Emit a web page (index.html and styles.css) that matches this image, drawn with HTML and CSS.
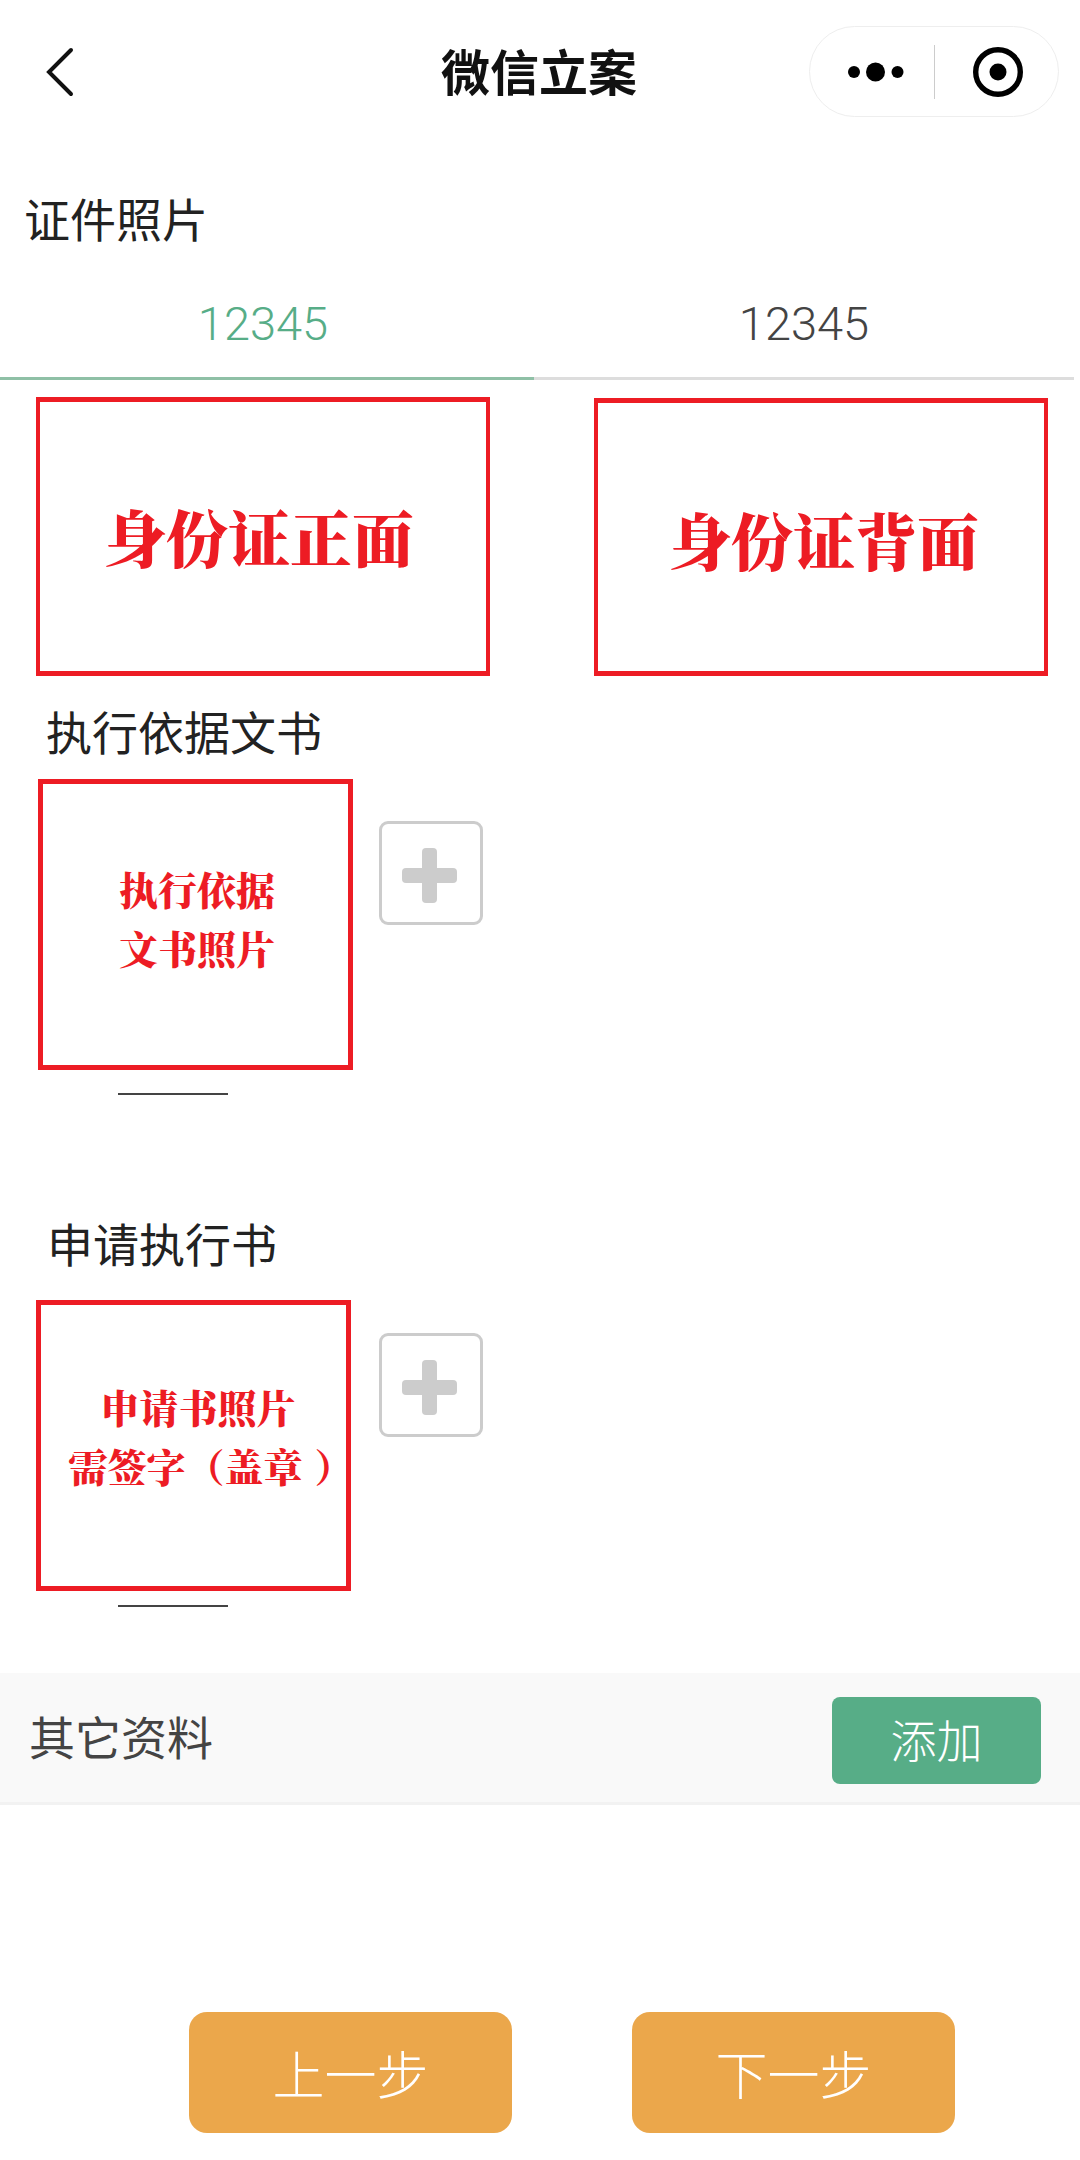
FILE: index.html
```html
<!DOCTYPE html>
<html lang="zh">
<head>
<meta charset="utf-8">
<title>微信立案</title>
<link rel="stylesheet" href="styles.css">
</head>
<body>
<div class="page">
  <header class="nav">
    <svg class="back" width="28" height="50" viewBox="0 0 28 50"><path d="M25 3 L3 25 L25 47" fill="none" stroke="#111" stroke-width="4" stroke-linecap="round" stroke-linejoin="miter"/></svg>
    <h1 class="nav-title">微信立案</h1>
    <div class="capsule">
      <svg class="dots" width="56" height="20" viewBox="0 0 56 20"><circle cx="6" cy="10" r="6" fill="#000"/><circle cx="27.5" cy="10" r="9.5" fill="#000"/><circle cx="49.5" cy="10" r="6" fill="#000"/></svg>
      <span class="capsule-line"></span>
      <svg class="target" width="50" height="50" viewBox="0 0 50 50"><circle cx="25" cy="25" r="22.3" fill="none" stroke="#000" stroke-width="5.4"/><circle cx="25" cy="25" r="8.5" fill="#000"/></svg>
    </div>
  </header>

  <h2 class="heading heading-cert">证件照片</h2>

  <div class="tabs">
    <div class="tab tab-active">12345</div>
    <div class="tab tab-idle">12345</div>
  </div>

  <div class="id-row">
    <div class="sample sample-front">身份证正面</div>
    <div class="sample sample-back">身份证背面</div>
  </div>

  <h2 class="heading heading-basis">执行依据文书</h2>
  <div class="upload upload-basis">
    <div class="upload-item">
      <div class="sample sample-doc">执行依据<br>文书照片</div>
      <span class="dash"></span>
    </div>
    <div class="add-box"><span class="plus"></span></div>
  </div>

  <h2 class="heading heading-apply">申请执行书</h2>
  <div class="upload upload-apply">
    <div class="upload-item">
      <div class="sample sample-apply"><div><span class="apply-first">申请书照片</span><br>需签字（盖章<span class="paren-close">）</span></div></div>
      <span class="dash"></span>
    </div>
    <div class="add-box"><span class="plus"></span></div>
  </div>

  <div class="other">
    <span class="other-label">其它资料</span>
    <button class="add-btn">添加</button>
  </div>

  <footer class="footer">
    <button class="step-btn">上一步</button>
    <button class="step-btn">下一步</button>
  </footer>
</div>
</body>
</html>
```
FILE: styles.css
```css
* { box-sizing: border-box; }
html, body { margin: 0; padding: 0; background: #fff; }
body { font-family: "Noto Sans CJK SC", "Liberation Sans", sans-serif; color: #222; }
.page { width: 1080px; height: 2160px; overflow: hidden; }
.nav { height: 117px; padding-top: 26px; display: grid; grid-template-columns: 1fr auto 1fr; align-items: center; }
.back { margin-left: 46px; margin-top: 1px; justify-self: start; }
.nav-title { margin: -3px 0 0 -2px; font-size: 49px; line-height: 60px; font-weight: 700; color: #111; }
.capsule { justify-self: end; margin-right: 21px; width: 250px; height: 91px; border: 1px solid #eee; border-radius: 46px; display: flex; align-items: center; background: #fff; }
.dots { margin-left: 38px; }
.capsule-line { width: 1px; height: 54px; background: #ccc; margin-left: 30px; }
.target { margin-left: 38px; }
.heading { margin: 0; font-size: 46px; line-height: 60px; font-weight: 400; color: #222; }
.heading-cert { margin-top: 70px; padding-left: 24px; }
.tabs { display: flex; height: 133px; width: 1074px; }
.tab { display: flex; align-items: center; justify-content: center; padding-top: 22px; font-family: Roboto, "Liberation Sans", sans-serif; font-weight: 300; font-size: 47px; color: #444; border-bottom: 3px solid #ddd; }
.tab-active { width: 534px; color: #57ad87; border-bottom-color: #8fc0a6; padding-right: 8px; }
.tab-idle { width: 540px; }
.id-row { display: flex; align-items: flex-start; padding: 17px 32px 0 36px; justify-content: space-between; }
.sample { border: 5px solid #ed1c24; color: #ed1c24; background: #fff; font-family: "Noto Serif CJK SC", "Noto Sans CJK SC", serif; font-weight: 900; display: flex; align-items: center; justify-content: center; text-align: center; text-spacing-trim: space-all; }
.sample-front { width: 454px; height: 279px; font-size: 62px; padding-right: 8px; border-width: 5px 4px; }
.sample-back { width: 454px; height: 278px; margin-top: 1px; font-size: 62px; padding: 4px 0 0 6px; border-width: 5px 4px; }
.heading-basis { margin-top: 24px; padding-left: 46px; }
.upload { display: flex; align-items: flex-start; }
.upload-basis { margin-top: 19px; padding-left: 38px; }
.upload-item { display: flex; flex-direction: column; align-items: flex-start; }
.sample-doc { width: 315px; height: 291px; font-size: 39px; line-height: 59px; padding: 0 0 14px 3px; }
.sample-apply { width: 315px; height: 291px; font-size: 39px; line-height: 59px; padding: 0 0 19px 35px; white-space: nowrap; }
.apply-first { display: inline-block; margin-right: 26px; }
.paren-close { margin-left: 12px; }
.dash { width: 110px; height: 2px; background: #444; margin-top: 23px; }
.upload-basis .dash { margin-left: 80px; }
.upload-apply .dash { margin-left: 82px; margin-top: 14px; }
.add-box { width: 104px; height: 104px; margin-top: 42px; margin-left: 26px; border: 3px solid #ccc; border-radius: 9px; display: flex; align-items: center; justify-content: center; }
.upload-apply .add-box { margin-top: 33px; margin-left: 28px; }
.plus { position: relative; width: 55px; height: 55px; margin: 4px 3px 0 0; }
.plus::before, .plus::after { content: ""; position: absolute; background: #ccc; border-radius: 4px; }
.plus::before { left: 20px; top: 0; width: 15px; height: 55px; }
.plus::after { left: 0; top: 20px; width: 55px; height: 15px; }
.heading-apply { margin-top: 117px; padding-left: 47px; }
.upload-apply { margin-top: 28px; padding-left: 36px; }
.other { margin-top: 66px; height: 132px; background: #f9f9f9; border-bottom: 3px solid #f2f2f2; display: flex; align-items: center; justify-content: space-between; padding: 0 39px 0 29px; }
.other-label { font-size: 46px; font-weight: 400; color: #444; margin-bottom: 5px; }
.add-btn { width: 209px; height: 87px; margin-top: 5px; border: 0; border-radius: 8px; background: #57ad87; color: #fff; font: 300 46px "Noto Sans CJK SC", sans-serif; padding: 0 0 4px; }
.footer { margin-top: 207px; padding-left: 189px; display: flex; gap: 120px; }
.step-btn { width: 323px; height: 121px; border: 0; border-radius: 18px; background: #eba74b; color: #fff; font: 300 52px "Noto Sans CJK SC", sans-serif; padding: 0; }
```
